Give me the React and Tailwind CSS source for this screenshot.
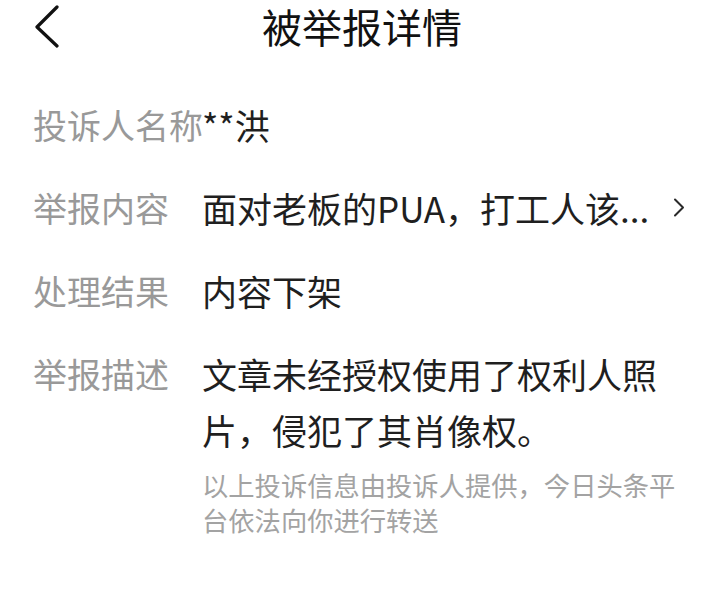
const FONT = { fontFamily: '"Noto Sans CJK SC", "Noto Sans", sans-serif' }

function Row({ label, children, arrow }) {
  return (
    <div className="flex items-start">
      <div className="w-[169px] shrink-0 whitespace-nowrap text-[34px] leading-[56px] text-[#999999]">
        {label}
      </div>
      <div className="flex-1 min-w-0 text-[35px] leading-[56px] text-[#1f1f1f]">{children}</div>
      {arrow && (
        <svg width="12" height="56" viewBox="0 0 12 56" className="shrink-0 ml-2">
          <polyline points="2,19.5 10,27.5 2,35.5" fill="none" stroke="#2a2a2a" strokeWidth="2" strokeLinecap="round" strokeLinejoin="round" />
        </svg>
      )}
    </div>
  )
}

export default function App() {
  return (
    <div className="w-[720px] h-[603px] bg-white overflow-hidden" style={FONT}>
      <header className="h-[52px] grid grid-cols-[1fr_auto_1fr] items-center">
        <div className="pl-[33px] flex items-center">
          <svg width="28" height="44" viewBox="0 0 28 44">
            <polyline points="24,3 4,23 24,42" fill="none" stroke="#111111" strokeWidth="3.2" strokeLinecap="round" strokeLinejoin="round" />
          </svg>
        </div>
        <h1 className="text-[40px] leading-[52px] text-[#111111] pl-[4px]">被举报详情</h1>
        <div />
      </header>

      <main className="pt-[45px] pl-[33px] pr-[35px] flex flex-col gap-[27px]">
        <Row label="投诉人名称">**洪</Row>
        <Row label="举报内容" arrow>
          <span className="whitespace-nowrap">面对老板的PUA，打工人该...</span>
        </Row>
        <Row label="处理结果">内容下架</Row>
        <div>
          <Row label="举报描述">文章未经授权使用了权利人照片，侵犯了其肖像权。</Row>
          <p className="ml-[169px] mt-[9px] text-[26.3px] leading-[35px] text-[#a3a3a3]">
            以上投诉信息由投诉人提供，今日头条平台依法向你进行转送
          </p>
        </div>
      </main>
    </div>
  )
}
